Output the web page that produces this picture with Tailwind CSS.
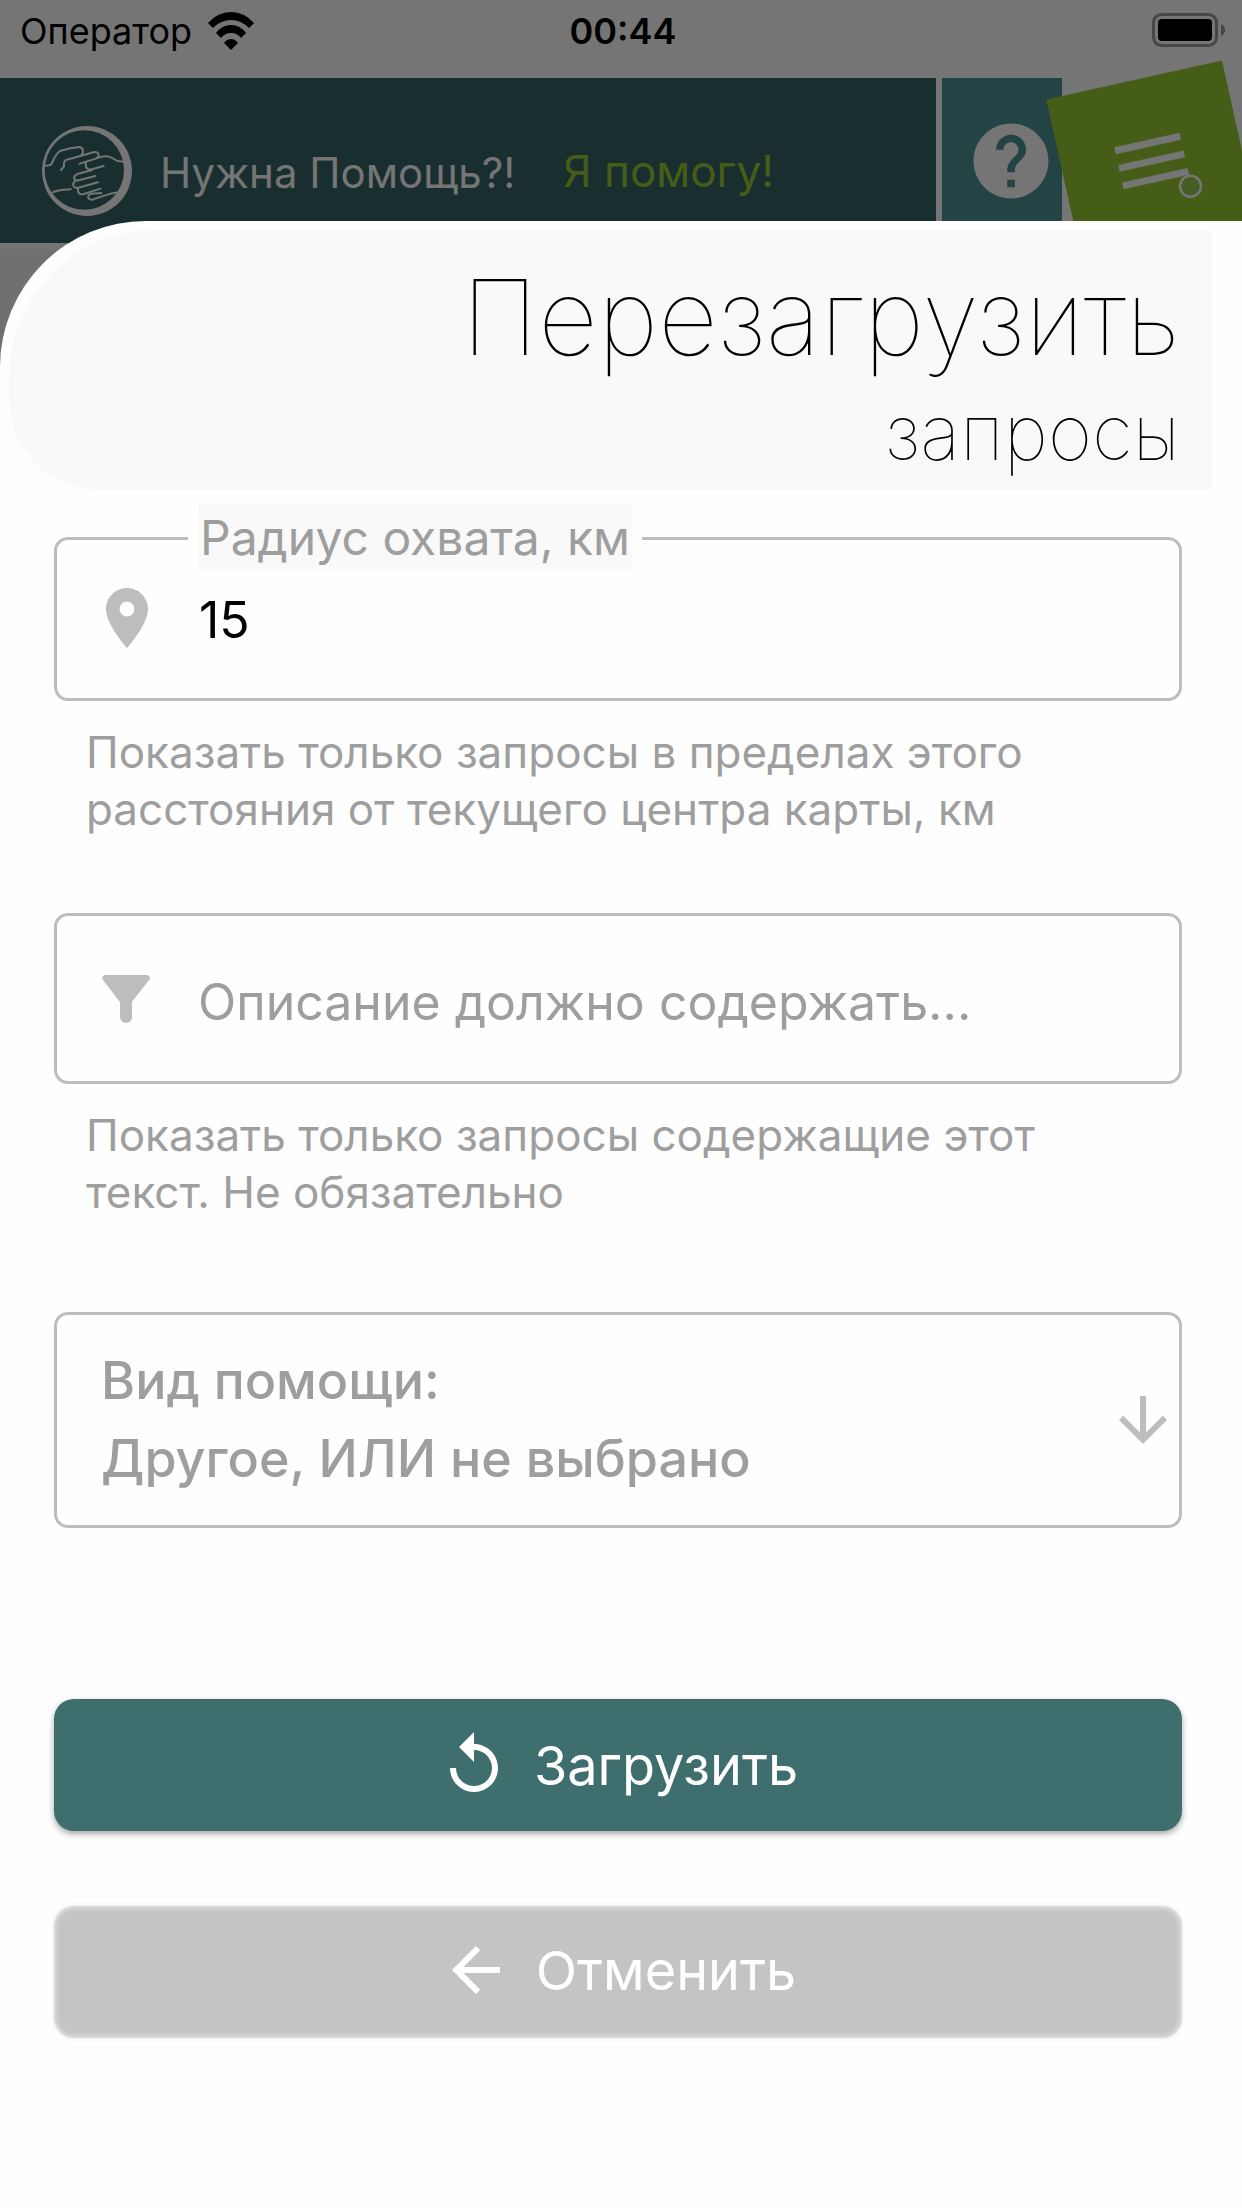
<!DOCTYPE html>
<html lang="ru">
<head>
  <meta charset="UTF-8" />
  <meta name="viewport" content="width=device-width, initial-scale=1.0" />
  <title>Нужна Помощь?! | Перезагрузить запросы</title>
  <script src="https://cdn.jsdelivr.net/npm/@tailwindcss/browser@4"></script>
</head>
<body class="font-[Inter,Roboto,sans-serif] bg-[#707070]">
  <div class="min-h-screen flex flex-col overflow-hidden">

    <!-- Status bar -->
    <div class="h-[78px] bg-[#757575] grid grid-cols-3 items-center pl-5 pr-4 pb-4 text-4xl text-black">
      <div class="flex items-center gap-4">
        <span>Оператор</span>
        <svg class="w-[46px] h-10" viewBox="0 0 46 40">
          <path d="M0 12Q10 1 23 1T46 12L41 17Q33 9 23 9T5 17Z" />
          <path d="M8 22Q14 14 23 14T38 22L33 27Q29 22 23 22T13 27Z" />
          <path d="M16 32Q19 28 23 28T30 32L23 39Z" />
        </svg>
      </div>
      <span class="text-center font-semibold">00:44</span>
      <svg class="w-[74px] h-9 justify-self-end" viewBox="0 0 74 36">
        <rect x="1.500" y="1.500" width="63" height="31" rx="8" fill="none" stroke="#474747" stroke-width="3" />
        <rect x="6" y="6" width="54" height="22" rx="4" fill="#000" />
        <path d="M69 11q4 2 4 6t-4 6z" fill="#474747" />
      </svg>
    </div>

    <!-- App header -->
    <header class="flex h-[171px] bg-[#757575] border-b-[6px] border-[#757575]">
      <div class="flex-1 flex items-center bg-[#192f2f] pl-[42px] pt-5 mr-[6px]">
        <svg class="w-[90px] h-[90px] shrink-0" viewBox="36 33 270 270" fill="none" stroke="#757575" stroke-width="6" stroke-linecap="round" stroke-linejoin="round">
          <path fill="#757575" stroke="none" fill-rule="evenodd" d="M171 33a135 135 0 1 0 0 270a135 135 0 1 0 0-270zM163 46a119 119 0 1 1 0 238a119 119 0 1 1 0-238z" />
          <path d="M47 152L62 150C70 142 72 120 90 108C110 101 125 98 147 96C160 97 162 112 155 119" />
          <path d="M93 165L102 154C101 142 102 134 116 133L193 111C208 110 209 124 200 130L149 146" />
          <path d="M200 129C235 118 245 127 262 138L281 140" />
          <path d="M168 142C164 158 172 165 185 163L221 153" />
          <path d="M186 165L145 176C130 181 128 193 140 197L196 183" />
          <path d="M136 197C124 208 130 218 142 219L204 202" />
          <path d="M144 219C142 236 150 240 162 237L211 221" />
          <path d="M214 234L184 236C170 242 172 254 186 254C215 246 240 234 266 232" />
          <path d="M68 232C85 223 105 224 122 223" />
        </svg>
        <span class="ml-[28px] pt-1 text-[42px] text-[#757575] whitespace-nowrap">Нужна Помощь?!</span>
        <a href="#" class="ml-[48px] text-[44px] text-[#465d17] whitespace-nowrap">Я помогу!</a>
      </div>
      <button type="button" aria-label="Справка" class="w-[120px] bg-[#234344] flex items-center justify-end pr-[6px]">
        <svg class="w-[90px] h-[90px]" viewBox="0 0 24 24" fill="#757575">
          <path d="M12 2C6.480 2 2 6.480 2 12s4.480 10 10 10 10-4.480 10-10S17.520 2 12 2zm1 17h-2v-2h2v2zm2.070-7.750l-.9.920C13.450 12.900 13 13.500 13 15h-2v-.5c0-1.100.45-2.100 1.170-2.830l1.240-1.260c.37-.36.59-.86.59-1.410 0-1.100-.9-2-2-2s-2 .9-2 2H8c0-2.210 1.790-4 4-4s4 1.790 4 4c0 .88-.36 1.680-.93 2.250z" />
        </svg>
      </button>
      <button type="button" aria-label="Меню" class="w-[180px] bg-[#465d17] flex items-center justify-center -rotate-[12.5deg]">
        <svg class="w-[100px] h-[100px]" viewBox="-50 -50 100 100" fill="#757575">
          <path d="M-34-21.500h67v7h-67zM-34-3.500h67v7h-67zM-34 14.500h67v7h-67z" />
          <circle cx="32" cy="33" r="10.500" fill="#465d25" stroke="#757575" stroke-width="2.500" />
        </svg>
      </button>
    </header>

    <!-- Sheet -->
    <main class="relative -mt-[28px] flex-1 bg-[#fefefe] rounded-tl-[146px] pt-[9px]">
      <div class="ml-[9px] mr-[30px] h-[260px] bg-[#f9f9f9] rounded-tl-[146px] rounded-bl-[90px] pt-7 pr-8 text-right font-thin text-black">
        <h1 class="text-[104px] leading-[118px]">Перезагрузить</h1>
        <p class="text-[76px] leading-[88px] pt-3">запросы</p>
      </div>

      <form class="px-[54px] mr-[6px] pt-[15px] text-[#9e9e9e]" onsubmit="return false">
        <!-- Radius -->
        <fieldset class="border-[3px] border-[#bdbdbd] rounded-[14px]">
          <legend class="ml-[131px] px-[10px]">
            <label for="radius" class="block bg-[#f9f9f9] px-0.5 text-[48px] leading-[66px]">Радиус охвата, км</label>
          </legend>
          <div class="flex items-center pl-[34px] pr-6 pt-[11px] pb-[44px]">
            <svg class="w-[72px] h-[72px] shrink-0" viewBox="0 0 24 24" fill="#bdbdbd">
              <path d="M12 2C8.130 2 5 5.130 5 9c0 5.250 7 13 7 13s7-7.750 7-13c0-3.870-3.130-7-7-7zm0 9.500a2.500 2.500 0 1 1 0-5 2.500 2.500 0 0 1 0 5z" />
            </svg>
            <input id="radius" type="text" inputmode="numeric" value="15" class="flex-1 min-w-0 h-[72px] ml-9 pt-1 text-[50px] text-black outline-none" />
          </div>
        </fieldset>
        <p class="px-8 pt-[23px] text-[44px] leading-[57px]">Показать только запросы в пределах этого расстояния от текущего центра карты, км</p>

        <!-- Description filter -->
        <div class="mt-[75px] h-[171px] flex items-center border-[3px] border-[#bdbdbd] rounded-[14px] pl-[33px] pr-6">
          <svg class="w-[72px] h-[72px] shrink-0" viewBox="0 0 24 24" fill="#bdbdbd">
            <path d="M4.250 5.610C6.270 8.200 10 13 10 13v5a2 2 0 0 0 4 0v-5s3.720-4.800 5.740-7.390A.998.998 0 0 0 18.950 4H5.040c-.83 0-1.300.95-.79 1.610z" />
          </svg>
          <input type="text" aria-label="Описание" placeholder="Описание должно содержать..." class="flex-1 min-w-0 ml-9 pt-2 text-[50px] outline-none placeholder:text-[#9e9e9e]" />
        </div>
        <p class="px-8 pt-[23px] text-[44px] leading-[57px]">Показать только запросы содержащие этот текст. Не обязательно</p>

        <!-- Kind of help -->
        <div class="mt-[91px] flex items-center border-[3px] border-[#bdbdbd] rounded-[14px] pl-11 py-[27px] text-[52px] leading-[78px] font-medium">
          <div class="flex-1 min-w-0">
            <label for="kind" class="block">Вид помощи:</label>
            <select id="kind" class="block w-full h-[78px] appearance-none outline-none">
              <option>Другое, ИЛИ не выбрано</option>
            </select>
          </div>
          <svg class="w-[72px] h-[72px] shrink-0" viewBox="0 0 24 24" fill="#bdbdbd">
            <path d="M20 12l-1.410-1.410L13 16.170V4h-2v12.170l-5.580-5.590L4 12l8 8 8-8z" />
          </svg>
        </div>

        <!-- Actions -->
        <button type="submit" class="mt-[171px] w-full h-[132px] flex items-center justify-center gap-6 rounded-[20px] bg-[#3e6e6d] text-white text-[54px] shadow-[0_3px_6px_rgba(0,0,0,0.35)]">
          <svg class="w-[72px] h-[72px]" viewBox="0 0 24 24" fill="currentColor">
            <path d="M12 5V1L7 6l5 5V7c3.310 0 6 2.690 6 6s-2.690 6-6 6-6-2.690-6-6H4c0 4.420 3.580 8 8 8s8-3.580 8-8-3.580-8-8-8z" />
          </svg>
          Загрузить
        </button>
        <button type="button" class="mt-[75px] w-full h-[132px] pb-1 flex items-center justify-center gap-6 rounded-[20px] bg-[#c4c4c4] text-white text-[54px] shadow-[inset_0_0_6px_rgba(255,255,255,0.9),0_0_4px_rgba(0,0,0,0.1)]">
          <svg class="w-[72px] h-[72px]" viewBox="0 0 24 24" fill="currentColor">
            <path d="M20 11H7.830l5.590-5.590L12 4l-8 8 8 8 1.410-1.410L7.830 13H20v-2z" />
          </svg>
          Отменить
        </button>
      </form>
    </main>
  </div>
</body>
</html>
